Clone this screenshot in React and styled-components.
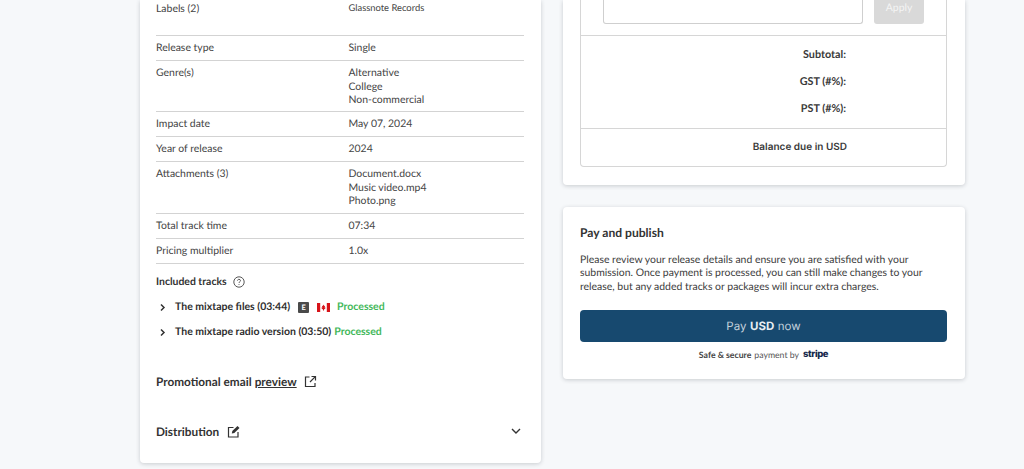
import React from "react";
import styled, { createGlobalStyle } from "styled-components";

const Global = createGlobalStyle`
  html, body { margin: 0; padding: 0; background: #f6f8fa; overflow: hidden; }
  #root { height: 469px; overflow: hidden; }
  * { box-sizing: border-box; }
`;
const Page = styled.div`
  display: grid;
  grid-template-columns: 401px 402px;
  column-gap: 22px;
  padding-left: 140px;
  align-items: start;
  font-family: "Lato", "Open Sans", sans-serif;
  color: #3c3c3c;
  font-size: 10.45px;
  text-rendering: geometricPrecision;
`;
const Card = styled.section`
  background: #fff;
  border-radius: 0 0 4px 4px;
  box-shadow: 0 1px 4px rgba(40, 50, 60, 0.22);
`;
const LeftCard = styled(Card)`
  height: 463px;
  padding: 0 17.5px 0 16px;
`;
const Row = styled.div`
  display: grid;
  grid-template-columns: 192.5px 1fr;
  height: ${(p) => p.$h}px;
  padding-top: ${(p) => p.$pt ?? 6}px;
  border-bottom: 1px solid #d3d3d3;
  line-height: 13.5px;
`;
const Label = styled.div`
  font-size: 10.45px;
  color: #454545;
`;
const Value = styled.div`
  color: #454545;
  font-size: ${(p) => (p.$small ? "9.4px" : "10.45px")};
  margin-top: ${(p) => (p.$small ? "-1px" : "0")};
`;
const TracksHead = styled.div`
  display: flex;
  align-items: center;
  gap: 6px;
  margin-top: 11px;
  height: 14px;
  font-size: 10.45px;
  font-weight: 700;
  color: #333;
`;
const Track = styled.div`
  display: flex;
  align-items: center;
  height: 14px;
  margin-top: ${(p) => p.$mt}px;
  padding-left: 2px;
  font-size: 10.5px;
  font-weight: 700;
  color: #2f2f2f;
  white-space: nowrap;
`;
const TrackName = styled.span`
  margin-left: 8px;
  margin-right: ${(p) => p.$mr}px;
`;
const Badge = styled.span`
  display: inline-flex;
  align-items: center;
  justify-content: center;
  width: 11px;
  height: 11px;
  background: #4a4a4a;
  border-radius: 1px;
  color: #fff;
  font-size: 7.5px;
  font-weight: 700;
  margin-right: 8px;
`;
const Flag = styled.svg`
  width: 13px;
  height: 9px;
  margin-right: 7px;
`;
const Status = styled.span`
  color: #43b85a;
  font-weight: 700;
`;
const Heading = styled.div`
  display: flex;
  align-items: center;
  font-size: 11.8px;
  font-weight: 700;
  color: #333;
  margin-top: ${(p) => p.$mt}px;
  height: 16px;
`;
const Under = styled.span`
  text-decoration: underline;
  margin-left: 3px;
  margin-right: 7px;
`;
const Spread = styled.span`
  margin-left: auto;
  margin-right: 2px;
  display: flex;
`;
const RightCol = styled.div`
  display: flex;
  flex-direction: column;
  gap: 22px;
`;
const SummaryCard = styled(Card)`
  height: 185px;
  padding: 0 18px 0 17px;
`;
const Summary = styled.div`
  height: 167px;
  border: 1px solid #d6d6d6;
  border-top: 0;
  border-radius: 0 0 4px 4px;
  display: flex;
  flex-direction: column;
`;
const CouponRow = styled.div`
  height: 36px;
  flex: none;
  display: flex;
  gap: 11px;
  padding: 0 22px;
  border-bottom: 1px solid #d6d6d6;
`;
const CouponInput = styled.div`
  width: 261px;
  height: 24px;
  border: 1px solid #cfcfcf;
  border-top: 0;
  border-radius: 0 0 3px 3px;
  background: #fff;
`;
const ApplyButton = styled.div`
  width: 50px;
  height: 24px;
  padding-top: 2px;
  text-align: center;
  background: #d9d9d9;
  border-radius: 0 0 3px 3px;
  color: #f4f4f4;
  font-size: 10.45px;
  line-height: 13px;
`;
const Totals = styled.div`
  height: 93px;
  flex: none;
  padding: 12px 0 0;
  border-bottom: 1px solid #d6d6d6;
  display: flex;
  flex-direction: column;
  gap: 13.6px;
`;
const TotalLine = styled.div`
  width: 265px;
  text-align: right;
  font-size: 10.8px;
  font-weight: 700;
  line-height: 13.4px;
  color: #3a3a3a;
`;
const BalanceLine = styled(TotalLine)`
  font-family: "Inter", sans-serif;
  font-size: 10px;
  font-weight: 600;
  width: 266px;
  margin-top: 12px;
`;
const PayCard = styled(Card)`
  height: 172px;
  border-radius: 4px;
  padding: 18px 18px 0 17px;
`;
const PayTitle = styled.div`
  font-size: 12.1px;
  font-weight: 700;
  color: #333;
  line-height: 15px;
`;
const PayText = styled.p`
  margin: 13.5px 0 0;
  font-size: 10.45px;
  line-height: 13.5px;
  color: #3d3d3d;
  white-space: nowrap;
`;
const PayButton = styled.div`
  height: 32px;
  margin-top: 16px;
  background: #17496f;
  border-radius: 4px;
  display: flex;
  align-items: center;
  justify-content: center;
  gap: 3.5px;
  color: #c3d1dc;
  font-family: "Inter", sans-serif;
  font-size: 11.5px;
`;
const Strong = styled.b`
  color: #e8eef3;
  font-weight: 700;
`;
const Secure = styled.div`
  display: flex;
  justify-content: center;
  align-items: center;
  gap: 3px;
  margin-top: 6px;
  font-size: 8.7px;
  color: #555;
  line-height: 14px;
`;
const SecureBold = styled.span`
  font-weight: 700;
  color: #444;
`;
const Stripe = styled.span`
  margin-left: 1px;
  font-family: "Inter", sans-serif;
  font-weight: 800;
  font-size: 9.5px;
  letter-spacing: -0.4px;
  color: #16294d;
`;

const Chevron = () => (
  <svg width="9" height="9" viewBox="0 0 9 9" fill="none" stroke="#333" strokeWidth="1.5">
    <path d="M3 1.5 6 4.5 3 7.5" />
  </svg>
);
const CanadaFlag = () => (
  <Flag viewBox="0 0 13 9">
    <rect width="13" height="9" fill="#fff" />
    <rect width="3.2" height="9" fill="#d7141a" />
    <rect x="9.8" width="3.2" height="9" fill="#d7141a" />
    <path d="M6.5 1.5 7.2 3l.8-.3-.3 2 .9-.3-.3 1.1L7 6.6V7.6H6V6.6L4.7 5.5 4.4 4.4l.9.3-.3-2 .8.3Z" fill="#d7141a" />
  </Flag>
);

export default function App() {
  return (
    <Page>
      <Global />
      <LeftCard>
        <Row $h={36} $pt={3}>
          <Label>Labels (2)</Label>
          <Value $small>Glassnote Records</Value>
        </Row>
        <Row $h={25}><Label>Release type</Label><Value>Single</Value></Row>
        <Row $h={51}>
          <Label>Genre(s)</Label>
          <Value>Alternative<br />College<br />Non-commercial</Value>
        </Row>
        <Row $h={25}><Label>Impact date</Label><Value>May 07, 2024</Value></Row>
        <Row $h={25}><Label>Year of release</Label><Value>2024</Value></Row>
        <Row $h={52}>
          <Label>Attachments (3)</Label>
          <Value>Document.docx<br />Music video.mp4<br />Photo.png</Value>
        </Row>
        <Row $h={25}><Label>Total track time</Label><Value>07:34</Value></Row>
        <Row $h={25}><Label>Pricing multiplier</Label><Value>1.0x</Value></Row>
        <TracksHead>
          Included tracks
          <svg width="12" height="12" viewBox="0 0 12 12" fill="none" stroke="#444" strokeWidth="0.9">
            <circle cx="6" cy="6" r="5.2" />
            <path d="M4.5 4.7C4.5 3.8 5.2 3.3 6 3.3S7.5 3.9 7.5 4.7C7.5 5.7 6 5.8 6 7" />
            <path d="M6 8.2V9" />
          </svg>
        </TracksHead>
        <Track $mt={11}>
          <Chevron />
          <TrackName $mr={8}>The mixtape files (03:44)</TrackName>
          <Badge>E</Badge>
          <CanadaFlag />
          <Status>Processed</Status>
        </Track>
        <Track $mt={11}>
          <Chevron />
          <TrackName $mr={3}>The mixtape radio version (03:50)</TrackName>
          <Status>Processed</Status>
        </Track>
        <Heading $mt={34}>
          Promotional email
          <Under>preview</Under>
          <svg width="13" height="13" viewBox="0 0 13 13" fill="none" stroke="#333" strokeWidth="1.2">
            <path d="M5.5 2H1.5v9.5H11V8" />
            <path d="M7.5 1.5h4v4M11.3 1.7 6 7" />
          </svg>
        </Heading>
        <Heading $mt={34}>
          Distribution
          <svg style={{ marginLeft: 8 }} width="13" height="13" viewBox="0 0 13 13" fill="none" stroke="#333" strokeWidth="1.2">
            <path d="M6.5 2.5H1.5v9.5H11V7" />
            <path d="M4.8 8.5 5.3 6 10.5 1l2 2L7.3 8Z" fill="#333" stroke="none" />
          </svg>
          <Spread>
            <svg width="12" height="12" viewBox="0 0 12 12" fill="none" stroke="#333" strokeWidth="1.4">
              <path d="M2 4l4 4 4-4" />
            </svg>
          </Spread>
        </Heading>
      </LeftCard>
      <RightCol>
        <SummaryCard>
          <Summary>
            <CouponRow>
              <CouponInput />
              <ApplyButton>Apply</ApplyButton>
            </CouponRow>
            <Totals>
              <TotalLine>Subtotal:</TotalLine>
              <TotalLine>GST (#%):</TotalLine>
              <TotalLine>PST (#%):</TotalLine>
            </Totals>
            <BalanceLine>Balance due in USD</BalanceLine>
          </Summary>
        </SummaryCard>
        <PayCard>
          <PayTitle>Pay and publish</PayTitle>
          <PayText>
            Please review your release details and ensure you are satisfied with your<br />
            submission. Once payment is processed, you can still make changes to your<br />
            release, but any added tracks or packages will incur extra charges.
          </PayText>
          <PayButton>Pay <Strong>USD</Strong> now</PayButton>
          <Secure>
            <SecureBold>Safe &amp; secure</SecureBold> payment by <Stripe>stripe</Stripe>
          </Secure>
        </PayCard>
      </RightCol>
    </Page>
  );
}
